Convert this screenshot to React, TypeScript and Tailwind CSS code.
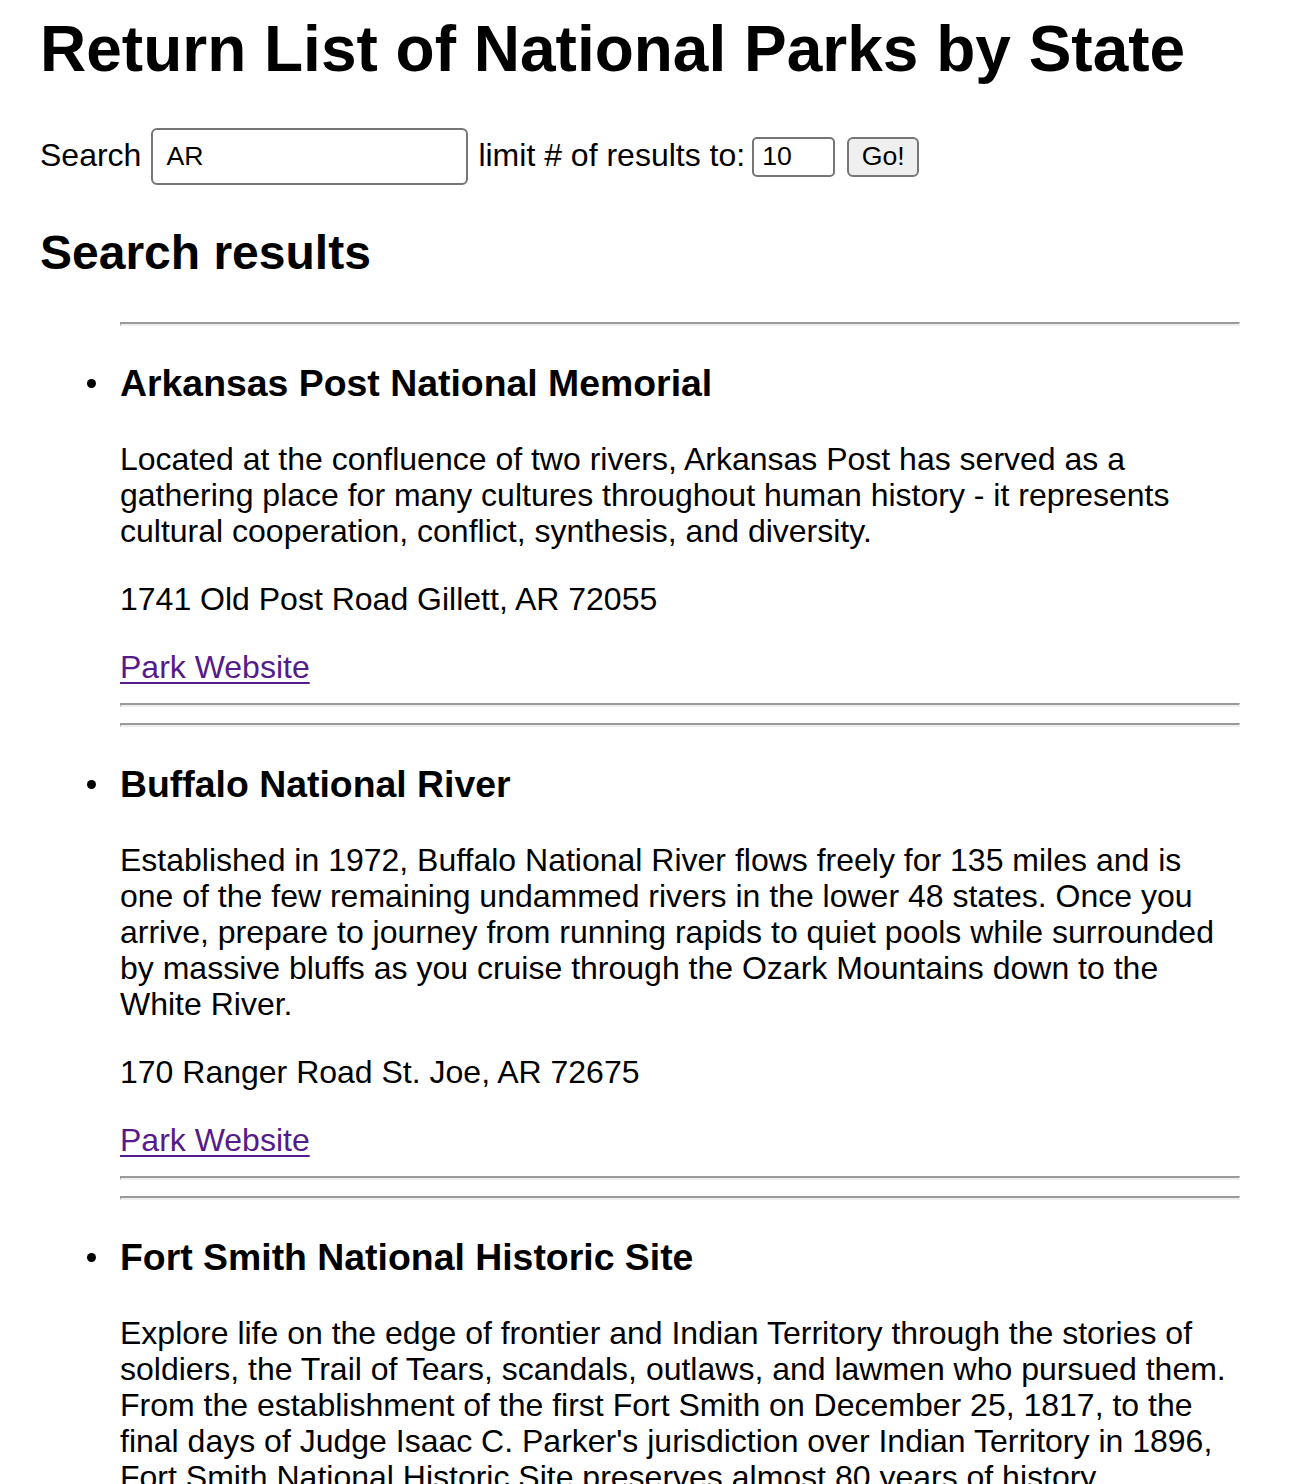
import { useState } from "react";

type Park = {
    name: string;
    description: string;
    address: string;
    url: string;
};

const parks: Park[] = [
    {
        name: "Arkansas Post National Memorial",
        description:
            "Located at the confluence of two rivers, Arkansas Post has served as a gathering place for many cultures throughout human history - it represents cultural cooperation, conflict, synthesis, and diversity.",
        address: "1741 Old Post Road Gillett, AR 72055",
        url: "#arpo",
    },
    {
        name: "Buffalo National River",
        description:
            "Established in 1972, Buffalo National River flows freely for 135 miles and is one of the few remaining undammed rivers in the lower 48 states. Once you arrive, prepare to journey from running rapids to quiet pools while surrounded by massive bluffs as you cruise through the Ozark Mountains down to the White River.",
        address: "170 Ranger Road St. Joe, AR 72675",
        url: "#buff",
    },
    {
        name: "Fort Smith National Historic Site",
        description:
            "Explore life on the edge of frontier and Indian Territory through the stories of soldiers, the Trail of Tears, scandals, outlaws, and lawmen who pursued them. From the establishment of the first Fort Smith on December 25, 1817, to the final days of Judge Isaac C. Parker's jurisdiction over Indian Territory in 1896, Fort Smith National Historic Site preserves almost 80 years of history.",
        address: "301 Parker Avenue Fort Smith, AR 72901",
        url: "#fosm",
    },
    {
        name: "Hot Springs National Park",
        description:
            "Hot Springs National Park is a unique blend of nature and culture. Discover the park's rich natural and cultural history and get a glimpse of the ways in which water and health are linked.",
        address: "101 Reserve Street Hot Springs, AR 71901",
        url: "#hosp",
    },
];

function Rule() {
    return <hr className="border-0 border-t-2 border-b-2 border-l border-r border-t-[#9a9a9a] border-l-[#9a9a9a] border-b-[#eeeeee] border-r-[#eeeeee] h-0" />;
}

function ParkItem({ park }: { park: Park }) {
    return (
        <li className="flex flex-col">
            <Rule />
            <div className="flex flex-row items-center mt-[36px] -ml-[33px]">
                <span className="w-[9px] h-[9px] rounded-full bg-black mr-[24px]" />
                <h3 className="text-[37.4px] leading-[43px] font-bold">{park.name}</h3>
            </div>
            <p className="mt-[36px] text-[32px] leading-[36px]">{park.description}</p>
            <p className="mt-[32px] text-[32px] leading-[36px]">{park.address}</p>
            <p className="mt-[32px] text-[32px] leading-[36px]">
                <a href={park.url} className="text-[#551a8b] underline decoration-2 underline-offset-[4px]">Park Website</a>
            </p>
            <div className="h-[18px]" />
            <Rule />
            <div className="h-[16px]" />
        </li>
    );
}

export default function App() {
    const [query, setQuery] = useState<string>("AR");
    const [limit, setLimit] = useState<string>("10");

    return (
        <div className="flex flex-col pl-[40px] pr-[40px] pt-[12px] pb-[40px] bg-white text-black font-['Liberation_Sans',Arial,sans-serif]">
            <h1 className="text-[64px] leading-[74px] font-bold">Return List of National Parks by State</h1>

            <div className="flex flex-row items-center mt-[42px] h-[57px] text-[32px]">
                <span className="-mt-[3px]">Search</span>
                <input
                    value={query}
                    onChange={(e) => setQuery(e.target.value)}
                    className="ml-[10px] w-[317px] h-[57px] border-2 border-[#767676] rounded-[6px] pl-[13px] text-[26.67px] outline-none"
                />
                <span className="ml-[10px] -mt-[3px]">limit # of results to:</span>
                <input
                    value={limit}
                    onChange={(e) => setLimit(e.target.value)}
                    className="ml-[7px] w-[83px] h-[40px] border-2 border-[#767676] rounded-[5px] pl-[8px] text-[26.67px] outline-none"
                />
                <button className="ml-[12px] w-[72px] h-[40px] border-2 border-[#767676] rounded-[6px] bg-[#efefef] text-[26.67px] leading-[34px] pb-[2px]">Go!</button>
            </div>

            <h2 className="mt-[40px] text-[48px] leading-[55px] font-bold">Search results</h2>

            <ul className="flex flex-col mt-[42px] pl-[80px] pr-[10px]">
                {parks.map((park, i) => (
                    <ParkItem park={park} key={i.toString()} />
                ))}
            </ul>
        </div>
    );
}
